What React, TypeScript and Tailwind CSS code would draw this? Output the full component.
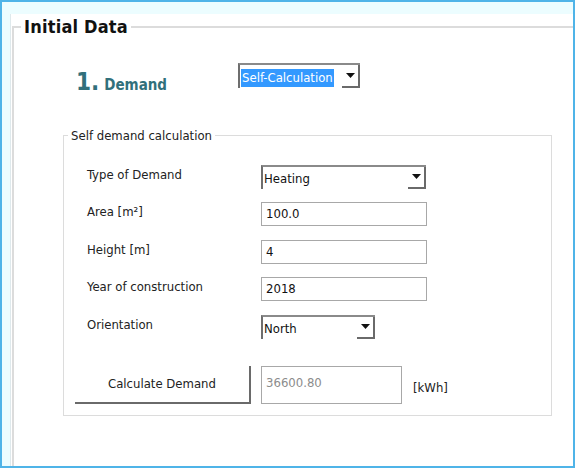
import React from "react";

const font = { fontFamily: '"DejaVu Sans Condensed", "Liberation Sans", sans-serif' };

function Arrow() {
  return (
    <svg width="9" height="5" viewBox="0 0 9 5" className="block">
      <path d="M0 0 H9 L4.5 5 Z" fill="#111" />
    </svg>
  );
}

function ComboBox({
  value,
  width,
  height = "h-[24px]",
  selected = false,
}: {
  value: string;
  width: string;
  height?: string;
  selected?: boolean;
}) {
  return (
    <div
      className={`flex ${width} ${height} border-t-2 border-l-2 border-t-[#8a8a8a] border-l-[#6e6e6e] bg-white`}
    >
      <div className="flex flex-1 items-center pl-[1px] pt-[2px]">
        <span
          className={
            selected
              ? "bg-[#3399ff] px-[1px] text-white leading-[18px]"
              : "text-[#111] leading-[18px]"
          }
        >
          {value}
        </span>
      </div>
      <div className="flex w-[18px] items-center justify-center border-r-2 border-b-2 border-r-[#6a6a6a] border-b-[#6a6a6a]">
        <Arrow />
      </div>
    </div>
  );
}

function TextBox({
  value,
  disabled = false,
  className = "",
}: {
  value: string;
  disabled?: boolean;
  className?: string;
}) {
  return (
    <div
      className={`flex items-center border border-[#a8a8a8] bg-white pl-[4px] ${
        disabled ? "text-[#8c8c8c]" : "text-[#111]"
      } ${className}`}
    >
      {value}
    </div>
  );
}

export default function App() {
  const rows = [
    { label: "Type of Demand", kind: "combo", value: "Heating" },
    { label: "Area [m²]", kind: "text", value: "100.0" },
    { label: "Height [m]", kind: "text", value: "4" },
    { label: "Year of construction", kind: "text", value: "2018" },
    { label: "Orientation", kind: "combo-short", value: "North" },
  ];

  return (
    <div
      className="h-[468px] w-[575px] overflow-hidden border-2 border-[#4fb4e8] bg-[#ecfdff]"
      style={font}
    >
      <div className="ml-[8px] mt-[12px] h-[452px] border-l border-[#dfe9ec] bg-white pl-[1px] pt-[3px]">
        <fieldset className="h-[460px] border-t-2 border-l-2 border-[#dcdcdc] pt-0">
          <legend className="ml-[7px] px-[3px] text-[18px] font-bold leading-[20px] tracking-[0.2px] text-[#111]">
            Initial Data
          </legend>

          <div className="ml-[62px] mt-[26px] flex items-start">
            <div className="mt-[7px] flex w-[162px] items-baseline text-[#31707b]">
              <span className="text-[24px] font-bold leading-[24px]">1.</span>
              <span className="ml-[5px] text-[15px] font-bold">Demand</span>
            </div>
            <div className="text-[13px]">
              <ComboBox value="Self-Calculation" width="w-[122px]" height="h-[25px]" selected />
            </div>
          </div>

          <fieldset className="ml-[49px] mt-[31px] h-[288px] w-[489px] border border-[#dcdcdc] px-[11px] text-[13px] text-[#222]">
            <legend className="ml-[-7px] px-[3px] text-[13px] leading-[16px]">
              Self demand calculation
            </legend>

            <div className="mt-[21px] grid grid-cols-[174px_1fr] gap-y-[13.5px] pl-[12px]">
              {rows.map((r) => (
                <React.Fragment key={r.label}>
                  <div className="flex h-[24px] items-start">{r.label}</div>
                  <div>
                    {r.kind === "combo" && (
                      <ComboBox value={r.value} width="w-[165px]" />
                    )}
                    {r.kind === "combo-short" && (
                      <ComboBox value={r.value} width="w-[114px]" />
                    )}
                    {r.kind === "text" && (
                      <TextBox value={r.value} className="h-[24px] w-[166px]" />
                    )}
                  </div>
                </React.Fragment>
              ))}
            </div>

            <div className="mt-[27px] flex items-end">
              <button className="flex h-[38px] w-[176px] items-center justify-center border-r-2 border-b-2 border-[#6a6a6a] bg-white text-[13px] text-[#222]">
                Calculate Demand
              </button>
              <TextBox
                value="36600.80"
                disabled
                className="ml-[10px] h-[38px] w-[141px] pb-[4px]"
              />
              <span className="mb-[6px] ml-[11px]">[kWh]</span>
            </div>
          </fieldset>
        </fieldset>
      </div>
    </div>
  );
}
